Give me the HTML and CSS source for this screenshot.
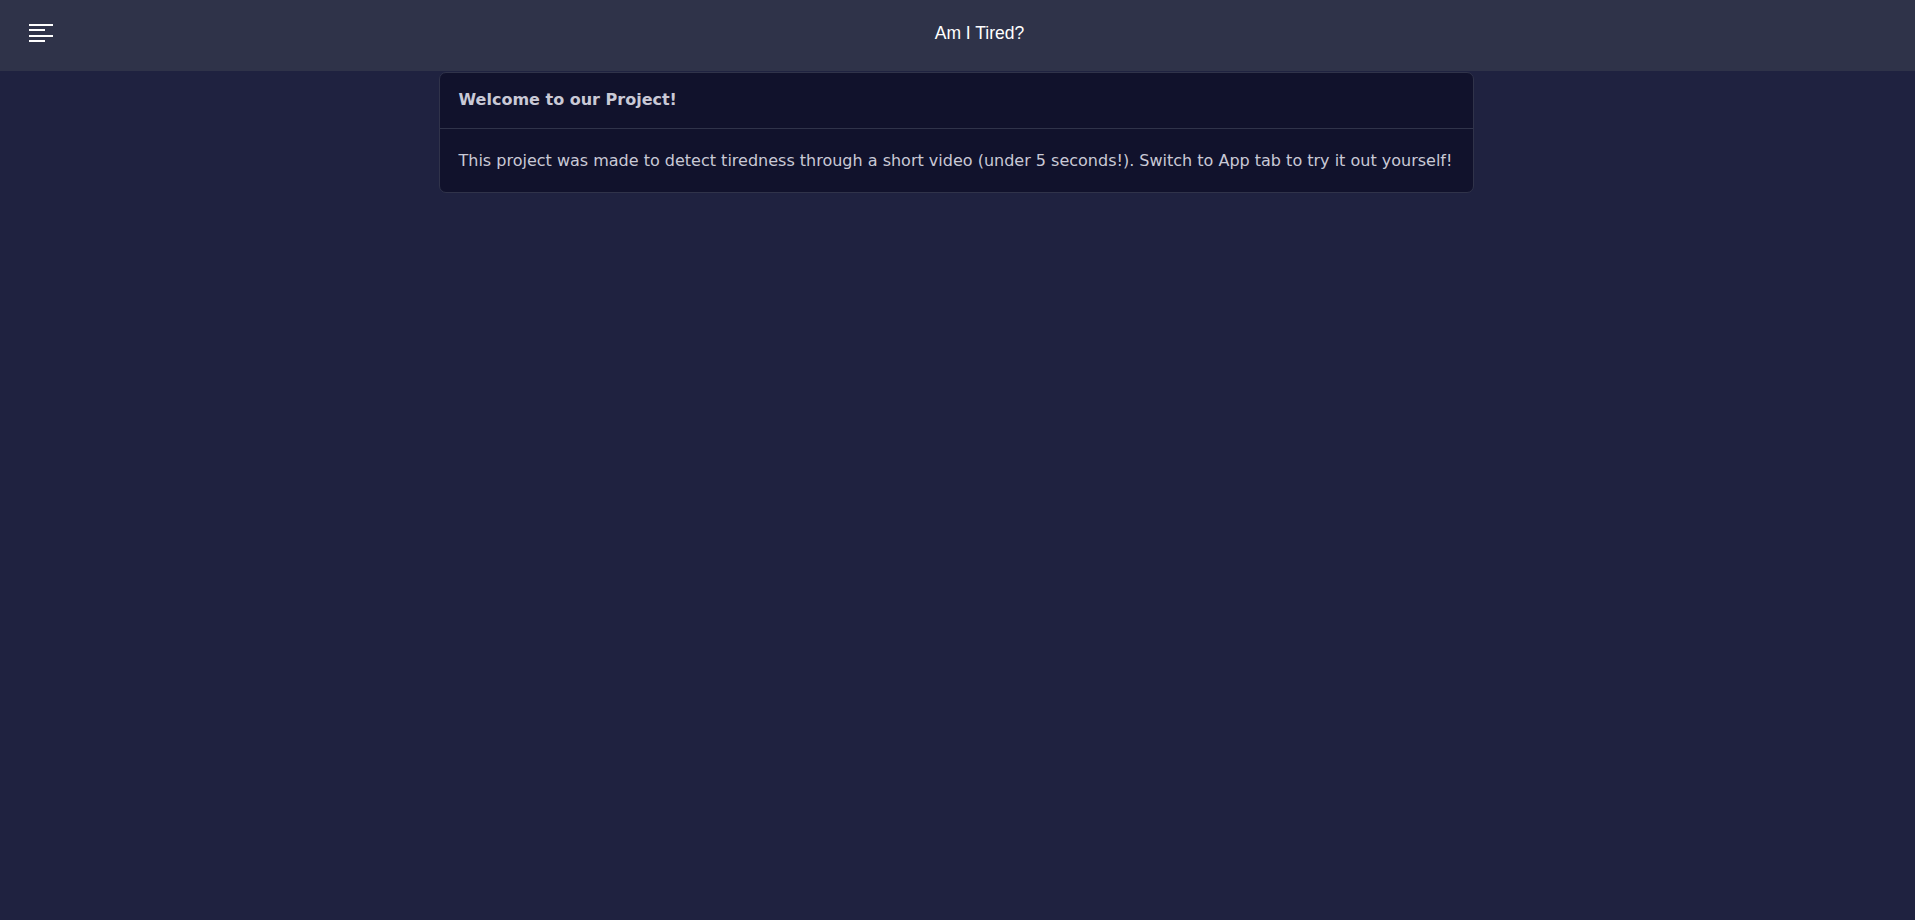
FILE: index.html
```html
<!DOCTYPE html>
<html lang="en">
<head>
<meta charset="utf-8">
<title>Am I Tired?</title>
<link rel="stylesheet" href="styles.css">
</head>
<body>
<header class="topbar">
  <button class="menu-btn" aria-label="Menu">
    <svg width="24" height="18" viewBox="0 0 24 18">
      <rect x="0" y="0" width="24" height="2" fill="#ffffff"/>
      <rect x="0" y="5" width="16" height="2" fill="#ffffff"/>
      <rect x="0" y="11" width="24" height="2" fill="#ffffff"/>
      <rect x="0" y="16" width="16" height="2" fill="#ffffff"/>
    </svg>
  </button>
  <div class="title">Am I Tired?</div>
</header>
<main class="content">
  <section class="card">
    <div class="card-header">Welcome to our Project!</div>
    <div class="card-body">This project was made to detect tiredness through a short video (under 5 seconds!). Switch to App tab to try it out yourself!</div>
  </section>
</main>
</body>
</html>
```
FILE: styles.css
```css
* { box-sizing: border-box; }
html, body {
  margin: 0;
  padding: 0;
  height: 100%;
}
body {
  background: #1f2240;
  font-family: "DejaVu Sans", sans-serif;
  color: #c9c9d6;
}
.topbar {
  height: 71px;
  background: #2f3349;
  display: flex;
  align-items: flex-start;
}
.menu-btn {
  width: 44px;
  flex: none;
  margin-top: 24px;
  padding: 0 0 0 29px;
  border: 0;
  background: none;
  display: block;
  line-height: 0;
  overflow: visible;
}
.title {
  flex: 1;
  text-align: center;
  font-family: "Liberation Sans", Arial, sans-serif;
  font-size: 17.5px;
  line-height: 20px;
  margin-top: 23px;
  color: #ffffff;
}
.content {
  display: flex;
  justify-content: center;
  padding: 1px 3px 0 0;
}
.card {
  width: 1035px;
  background: #11122c;
  border: 1px solid #30334a;
  border-radius: 7px;
}
.card-header {
  height: 56px;
  padding: 0 19px 2px;
  display: flex;
  align-items: center;
  font-weight: bold;
  font-size: 16px;
  border-bottom: 1px solid #30334a;
}
.card-body {
  height: 63px;
  padding: 0 19px;
  display: flex;
  align-items: center;
  font-size: 16px;
}
```
